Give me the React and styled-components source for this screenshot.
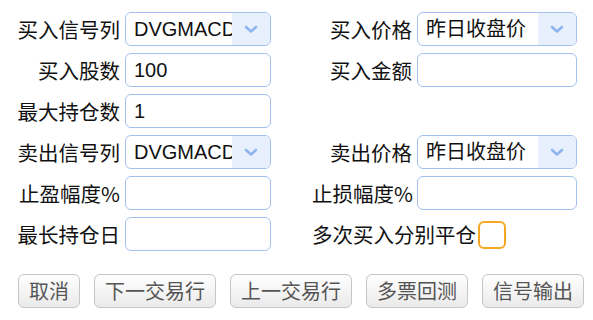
import React from "react";
import styled, { createGlobalStyle } from "styled-components";

const Global = createGlobalStyle`
  html, body { margin: 0; padding: 0; background: #ffffff; }
  body { font-family: "Noto Sans CJK SC", "Liberation Sans", sans-serif; }
`;

const Page = styled.div`
  width: 593px;
  height: 320px;
  box-sizing: border-box;
  padding: 12px 0 0 15px;
`;

const Form = styled.div`
  display: grid;
  grid-template-columns: 105px 146px 31px 100px 160px;
  grid-auto-rows: 34px;
  column-gap: 5px;
  row-gap: 7px;
  align-items: center;
`;

const Label = styled.div`
  font-family: "Noto Sans CJK SC", sans-serif;
  font-size: 20.5px;
  line-height: 34px;
  color: #111;
  text-align: right;
  white-space: nowrap;
  grid-column: ${(p) => p.$col};
`;

const Field = styled.div`
  grid-column: ${(p) => p.$col};
  height: 34px;
  box-sizing: border-box;
  border: 1px solid #a3c1ef;
  border-radius: 6px;
  background: #fff;
  display: flex;
  align-items: center;
  overflow: hidden;
`;

const FieldText = styled.div`
  flex: 1;
  min-width: 0;
  overflow: hidden;
  white-space: nowrap;
  padding: 0 6px 0 8px;
  font-family: "Liberation Sans", "Noto Sans CJK SC", sans-serif;
  font-size: 20px;
  line-height: 32px;
  color: #111;
  text-overflow: clip;
`;

const ArrowBox = styled.div`
  width: 38px;
  height: 100%;
  flex: none;
  background: #e8f0fd;
  display: flex;
  align-items: center;
  justify-content: center;
`;

const CheckCell = styled.div`
  grid-column: 4 / 6;
  display: flex;
  align-items: center;
  gap: 2px;
`;

const CheckLabel = styled.span`
  font-family: "Noto Sans CJK SC", sans-serif;
  font-size: 20.5px;
  color: #111;
  white-space: nowrap;
`;

const CheckBox = styled.div`
  width: 28px;
  height: 28px;
  box-sizing: border-box;
  border: 2px solid #f5a623;
  border-radius: 6px;
  background: #fff;
  margin-top: 2px;
`;

const Buttons = styled.div`
  display: flex;
  gap: 14px;
  margin-top: 23px;
  margin-left: 3px;
`;

const Button = styled.button`
  height: 34px;
  box-sizing: border-box;
  padding: 0 10px;
  border: 1px solid #c6c6c6;
  border-radius: 6px;
  background: linear-gradient(#ffffff, #eaeaea);
  font-family: "Noto Sans CJK SC", sans-serif;
  font-size: 20px;
  line-height: 32px;
  color: #555;
  cursor: pointer;
`;

const Chevron = () => (
  <svg width="14" height="9" viewBox="0 0 14 9">
    <path d="M2 2 L7 6.5 L12 2" fill="none" stroke="#8fb5ee" strokeWidth="2.6" strokeLinecap="round" strokeLinejoin="round" />
  </svg>
);

const Select = ({ col, value }) => (
  <Field $col={col}>
    <FieldText>{value}</FieldText>
    <ArrowBox>
      <Chevron />
    </ArrowBox>
  </Field>
);

const Input = ({ col, value }) => (
  <Field $col={col}>
    <FieldText>{value}</FieldText>
  </Field>
);

export default function App() {
  return (
    <Page>
      <Global />
      <Form>
        <Label $col={1}>买入信号列</Label>
        <Select col={2} value="DVGMACD" />
        <Label $col={4}>买入价格</Label>
        <Select col={5} value="昨日收盘价" />

        <Label $col={1}>买入股数</Label>
        <Input col={2} value="100" />
        <Label $col={4}>买入金额</Label>
        <Input col={5} value="" />

        <Label $col={1}>最大持仓数</Label>
        <Input col={2} value="1" />

        <Label $col={1}>卖出信号列</Label>
        <Select col={2} value="DVGMACD" />
        <Label $col={4}>卖出价格</Label>
        <Select col={5} value="昨日收盘价" />

        <Label $col={1}>止盈幅度%</Label>
        <Input col={2} value="" />
        <Label $col={4}>止损幅度%</Label>
        <Input col={5} value="" />

        <Label $col={1}>最长持仓日</Label>
        <Input col={2} value="" />
        <CheckCell>
          <CheckLabel>多次买入分别平仓</CheckLabel>
          <CheckBox />
        </CheckCell>
      </Form>
      <Buttons>
        <Button>取消</Button>
        <Button>下一交易行</Button>
        <Button>上一交易行</Button>
        <Button>多票回测</Button>
        <Button>信号输出</Button>
      </Buttons>
    </Page>
  );
}
